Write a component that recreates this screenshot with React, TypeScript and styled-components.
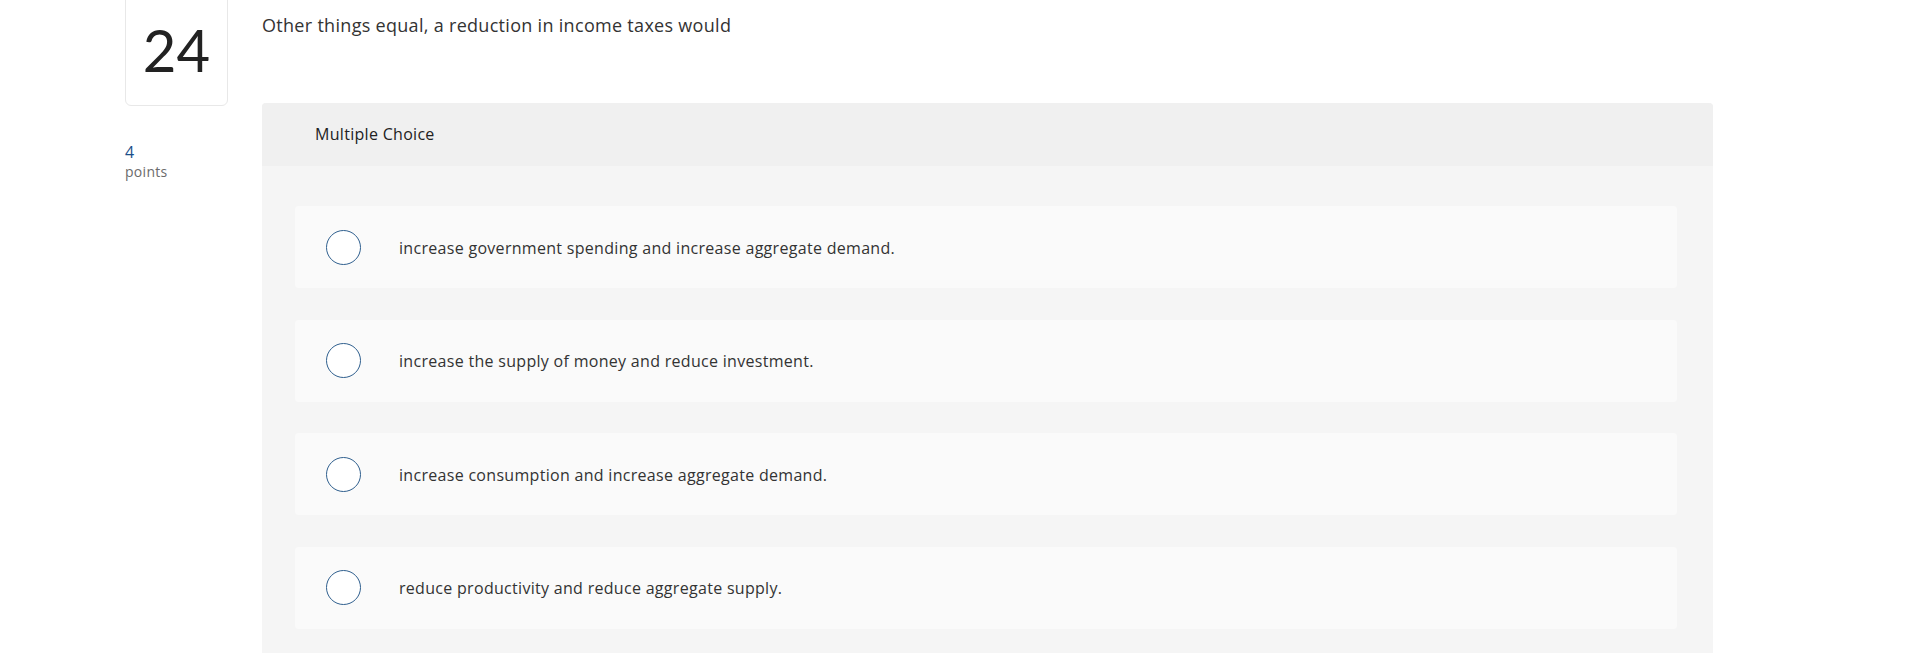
import React from 'react'
import styled, { createGlobalStyle } from 'styled-components'

const GlobalStyle = createGlobalStyle`
  html, body {
    margin: 0;
    padding: 0;
    background: #ffffff;
    font-family: "Open Sans", Lato, "Liberation Sans", sans-serif;
    letter-spacing: 0.3px;
    color: #333333;
  }
`

const Page = styled.div`
  display: flex;
  align-items: flex-start;
  gap: 34px;
  padding-left: 125px;
  height: 653px;
  overflow: hidden;
`

const Side = styled.aside`
  width: 103px;
  display: flex;
  flex-direction: column;
`

const NumberBox = styled.div`
  box-sizing: border-box;
  margin-top: -12px;
  height: 118px;
  border: 1px solid #e8e8e8;
  border-radius: 0 0 6px 6px;
  display: flex;
  align-items: center;
  justify-content: center;
  padding-top: 4px;
  font-family: Lato, "Open Sans", sans-serif;
  font-size: 58px;
  font-weight: 400;
  letter-spacing: 0;
  color: #222222;
`

const Points = styled.div`
  margin-top: 36px;
  display: flex;
  flex-direction: column;
`

const PointsValue = styled.span`
  font-size: 16px;
  line-height: 20px;
  color: #1b4f8a;
`

const PointsLabel = styled.span`
  font-size: 14px;
  line-height: 20px;
  color: #6b6b6b;
`

const Main = styled.main`
  width: 1451px;
  display: flex;
  flex-direction: column;
`

const Prompt = styled.p`
  margin: 0;
  padding-top: 13px;
  height: 90px;
  font-size: 18px;
  line-height: 24px;
  color: #333333;
`

const Panel = styled.section`
  border-radius: 4px 4px 0 0;
  background: #f5f5f5;
  overflow: hidden;
  min-height: 560px;
`

const PanelHeader = styled.header`
  height: 63px;
  display: flex;
  align-items: center;
  padding-left: 53px;
  padding-bottom: 2px;
  box-sizing: border-box;
  background: #f0f0f0;
  font-size: 16px;
  color: #222222;
`

const Choices = styled.ul`
  list-style: none;
  margin: 0;
  padding: 40px 36px 0 33px;
  display: flex;
  flex-direction: column;
  gap: 31.5px;
`

const Choice = styled.li`
  box-sizing: border-box;
  height: 82px;
  display: flex;
  align-items: center;
  padding: 1px 0 0 31px;
  background: #fafafa;
  border-radius: 4px;
  font-size: 16px;
  color: #333333;
  cursor: pointer;
`

const Radio = styled.span`
  box-sizing: border-box;
  flex: none;
  width: 35px;
  height: 35px;
  margin-top: -1px;
  border-radius: 50%;
  border: 1.5px solid #2f5f8e;
  background: #ffffff;
  margin-right: 38px;
`

const options = [
  'increase government spending and increase aggregate demand.',
  'increase the supply of money and reduce investment.',
  'increase consumption and increase aggregate demand.',
  'reduce productivity and reduce aggregate supply.',
]

export default function App() {
  return (
    <>
      <GlobalStyle />
      <Page>
        <Side>
          <NumberBox>24</NumberBox>
          <Points>
            <PointsValue>4</PointsValue>
            <PointsLabel>points</PointsLabel>
          </Points>
        </Side>
        <Main>
          <Prompt>Other things equal, a reduction in income taxes would</Prompt>
          <Panel>
            <PanelHeader>Multiple Choice</PanelHeader>
            <Choices>
              {options.map((text) => (
                <Choice key={text}>
                  <Radio />
                  {text}
                </Choice>
              ))}
            </Choices>
          </Panel>
        </Main>
      </Page>
    </>
  )
}
